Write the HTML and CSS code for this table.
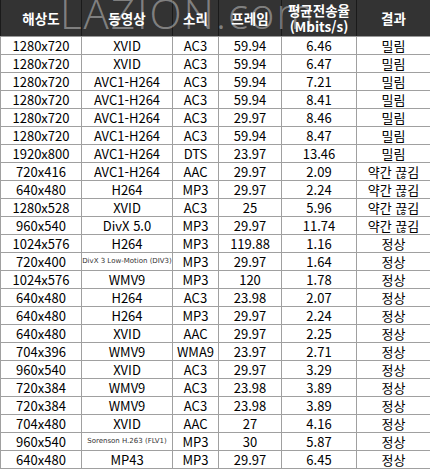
FILE: index.html
```html
<!DOCTYPE html>
<html lang="ko">
<head>
<meta charset="utf-8">
<link rel="stylesheet" href="styles.css">
</head>
<body>
<div class="wrap">
<table class="grid">
<colgroup>
<col class="c1"><col class="c2"><col class="c3"><col class="c4"><col class="c5"><col class="c6">
</colgroup>
<thead>
<tr><th>해상도</th><th>동영상</th><th>소리</th><th>프레임</th><th>평균전송율<br>(Mbits/s)</th><th>결과</th></tr>
</thead>
<tbody>
<tr><td>1280x720</td><td>XVID</td><td>AC3</td><td>59.94</td><td>6.46</td><td>밀림</td></tr>
<tr><td>1280x720</td><td>XVID</td><td>AC3</td><td>59.94</td><td>6.47</td><td>밀림</td></tr>
<tr><td>1280x720</td><td>AVC1-H264</td><td>AC3</td><td>59.94</td><td>7.21</td><td>밀림</td></tr>
<tr><td>1280x720</td><td>AVC1-H264</td><td>AC3</td><td>59.94</td><td>8.41</td><td>밀림</td></tr>
<tr><td>1280x720</td><td>AVC1-H264</td><td>AC3</td><td>29.97</td><td>8.46</td><td>밀림</td></tr>
<tr><td>1280x720</td><td>AVC1-H264</td><td>AC3</td><td>59.94</td><td>8.47</td><td>밀림</td></tr>
<tr><td>1920x800</td><td>AVC1-H264</td><td>DTS</td><td>23.97</td><td>13.46</td><td>밀림</td></tr>
<tr><td>720x416</td><td>AVC1-H264</td><td>AAC</td><td>29.97</td><td>2.09</td><td>약간 끊김</td></tr>
<tr><td>640x480</td><td>H264</td><td>MP3</td><td>29.97</td><td>2.24</td><td>약간 끊김</td></tr>
<tr><td>1280x528</td><td>XVID</td><td>AC3</td><td>25</td><td>5.96</td><td>약간 끊김</td></tr>
<tr><td>960x540</td><td>DivX 5.0</td><td>MP3</td><td>29.97</td><td>11.74</td><td>약간 끊김</td></tr>
<tr><td>1024x576</td><td>H264</td><td>MP3</td><td>119.88</td><td>1.16</td><td>정상</td></tr>
<tr><td>720x400</td><td><span class="tiny">DivX 3 Low-Motion (DIV3)</span></td><td>MP3</td><td>29.97</td><td>1.64</td><td>정상</td></tr>
<tr><td>1024x576</td><td>WMV9</td><td>MP3</td><td>120</td><td>1.78</td><td>정상</td></tr>
<tr><td>640x480</td><td>H264</td><td>AC3</td><td>23.98</td><td>2.07</td><td>정상</td></tr>
<tr><td>640x480</td><td>H264</td><td>MP3</td><td>29.97</td><td>2.24</td><td>정상</td></tr>
<tr><td>640x480</td><td>XVID</td><td>AAC</td><td>29.97</td><td>2.25</td><td>정상</td></tr>
<tr><td>704x396</td><td>WMV9</td><td>WMA9</td><td>23.97</td><td>2.71</td><td>정상</td></tr>
<tr><td>960x540</td><td>XVID</td><td>AC3</td><td>29.97</td><td>3.29</td><td>정상</td></tr>
<tr><td>720x384</td><td>WMV9</td><td>AC3</td><td>23.98</td><td>3.89</td><td>정상</td></tr>
<tr><td>720x384</td><td>WMV9</td><td>AC3</td><td>23.98</td><td>3.89</td><td>정상</td></tr>
<tr><td>704x480</td><td>XVID</td><td>AAC</td><td>27</td><td>4.16</td><td>정상</td></tr>
<tr><td>960x540</td><td><span class="tiny">Sorenson H.263 (FLV1)</span></td><td>MP3</td><td>30</td><td>5.87</td><td>정상</td></tr>
<tr><td>640x480</td><td>MP43</td><td>MP3</td><td>29.97</td><td>6.45</td><td>정상</td></tr>
</tbody>
</table>
<div class="mark">LAZION.com</div>
</div>
</body>
</html>
```

FILE: styles.css
```css
html, body {
  margin: 0;
  padding: 0;
  background: #fff;
}
.wrap {
  position: relative;
  width: 430px;
  overflow: hidden;
}
.grid {
  border-collapse: collapse;
  table-layout: fixed;
  width: 430px;
  font-family: "Noto Sans CJK KR", "Noto Sans", sans-serif;
  font-size: 13px;
  color: #000;
}
.c1 { width: 81px; }
.c2 { width: 91px; }
.c3 { width: 46px; }
.c4 { width: 63px; }
.c5 { width: 75px; }
.c6 { width: 74px; }
.grid th {
  background: #333;
  color: #fff;
  font-weight: bold;
  height: 36px;
  padding: 0;
  line-height: 16px;
  border-left: 1px solid #1a1a1a;
  border-right: 1px solid #1a1a1a;
  border-bottom: 1px solid #999;
  font-size: 13.5px;
}
.grid td {
  height: 17px;
  padding: 0;
  line-height: 17px;
  text-align: center;
  border: 1px solid #a0a0a0;
  white-space: nowrap;
  overflow: hidden;
}
.tiny {
  font-size: 7px;
  font-family: "DejaVu Sans", sans-serif;
  color: #333;
  vertical-align: top;
}
.mark {
  position: absolute;
  left: 60px;
  top: -8px;
  font-family: "Open Sans", sans-serif;
  font-weight: 300;
  font-size: 42px;
  line-height: 42px;
  letter-spacing: 2px;
  color: rgba(255, 255, 255, 0.4);
  pointer-events: none;
}
```
